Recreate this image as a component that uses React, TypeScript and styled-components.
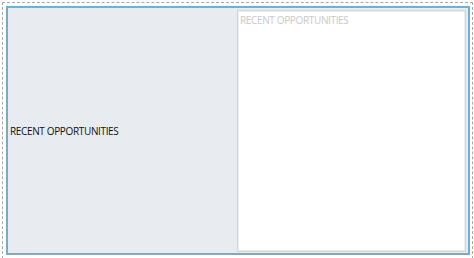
import React from "react";
import styled, { createGlobalStyle } from "styled-components";

const Global = createGlobalStyle`
  html, body { margin: 0; padding: 0; background: #ffffff; overflow: hidden; }
  body { font-family: "Open Sans", "Noto Sans", sans-serif; }
`;

const Frame = styled.div`
  box-sizing: border-box;
  margin: 2px 0 0 2px;
  width: 471px;
  height: 262px;
  border: 1px dashed #a8a8a8;
  padding: 3px 0 0 3px;
`;

const Container = styled.div`
  box-sizing: border-box;
  width: 464px;
  height: 249px;
  border: 2px solid #7eaabb;
  border-top-color: #6bb2d8;
  border-right-color: #6fb0d4;
  background: #e8ebef;
  display: grid;
  grid-template-columns: 1fr 229px;
  padding: 2px 2px 1px 0;
`;

const Label = styled.div`
  display: flex;
  align-items: center;
  padding-left: 2px;
  font-size: 10px;
  color: #111111;
  letter-spacing: -0.35px;
`;

const Panel = styled.div`
  box-sizing: border-box;
  background: #ffffff;
  border: 1px solid #d4d4d4;
  box-shadow: inset 0 0 0 1px #eeeeee;
  padding: 2px 0 0 2px;
`;

const PanelTitle = styled.div`
  font-size: 10px;
  line-height: 14px;
  color: #c9c9c9;
  letter-spacing: -0.35px;
`;

export default function App() {
  return (
    <>
      <Global />
      <Frame>
        <Container>
          <Label>RECENT OPPORTUNITIES</Label>
          <Panel>
            <PanelTitle>RECENT OPPORTUNITIES</PanelTitle>
          </Panel>
        </Container>
      </Frame>
    </>
  );
}
